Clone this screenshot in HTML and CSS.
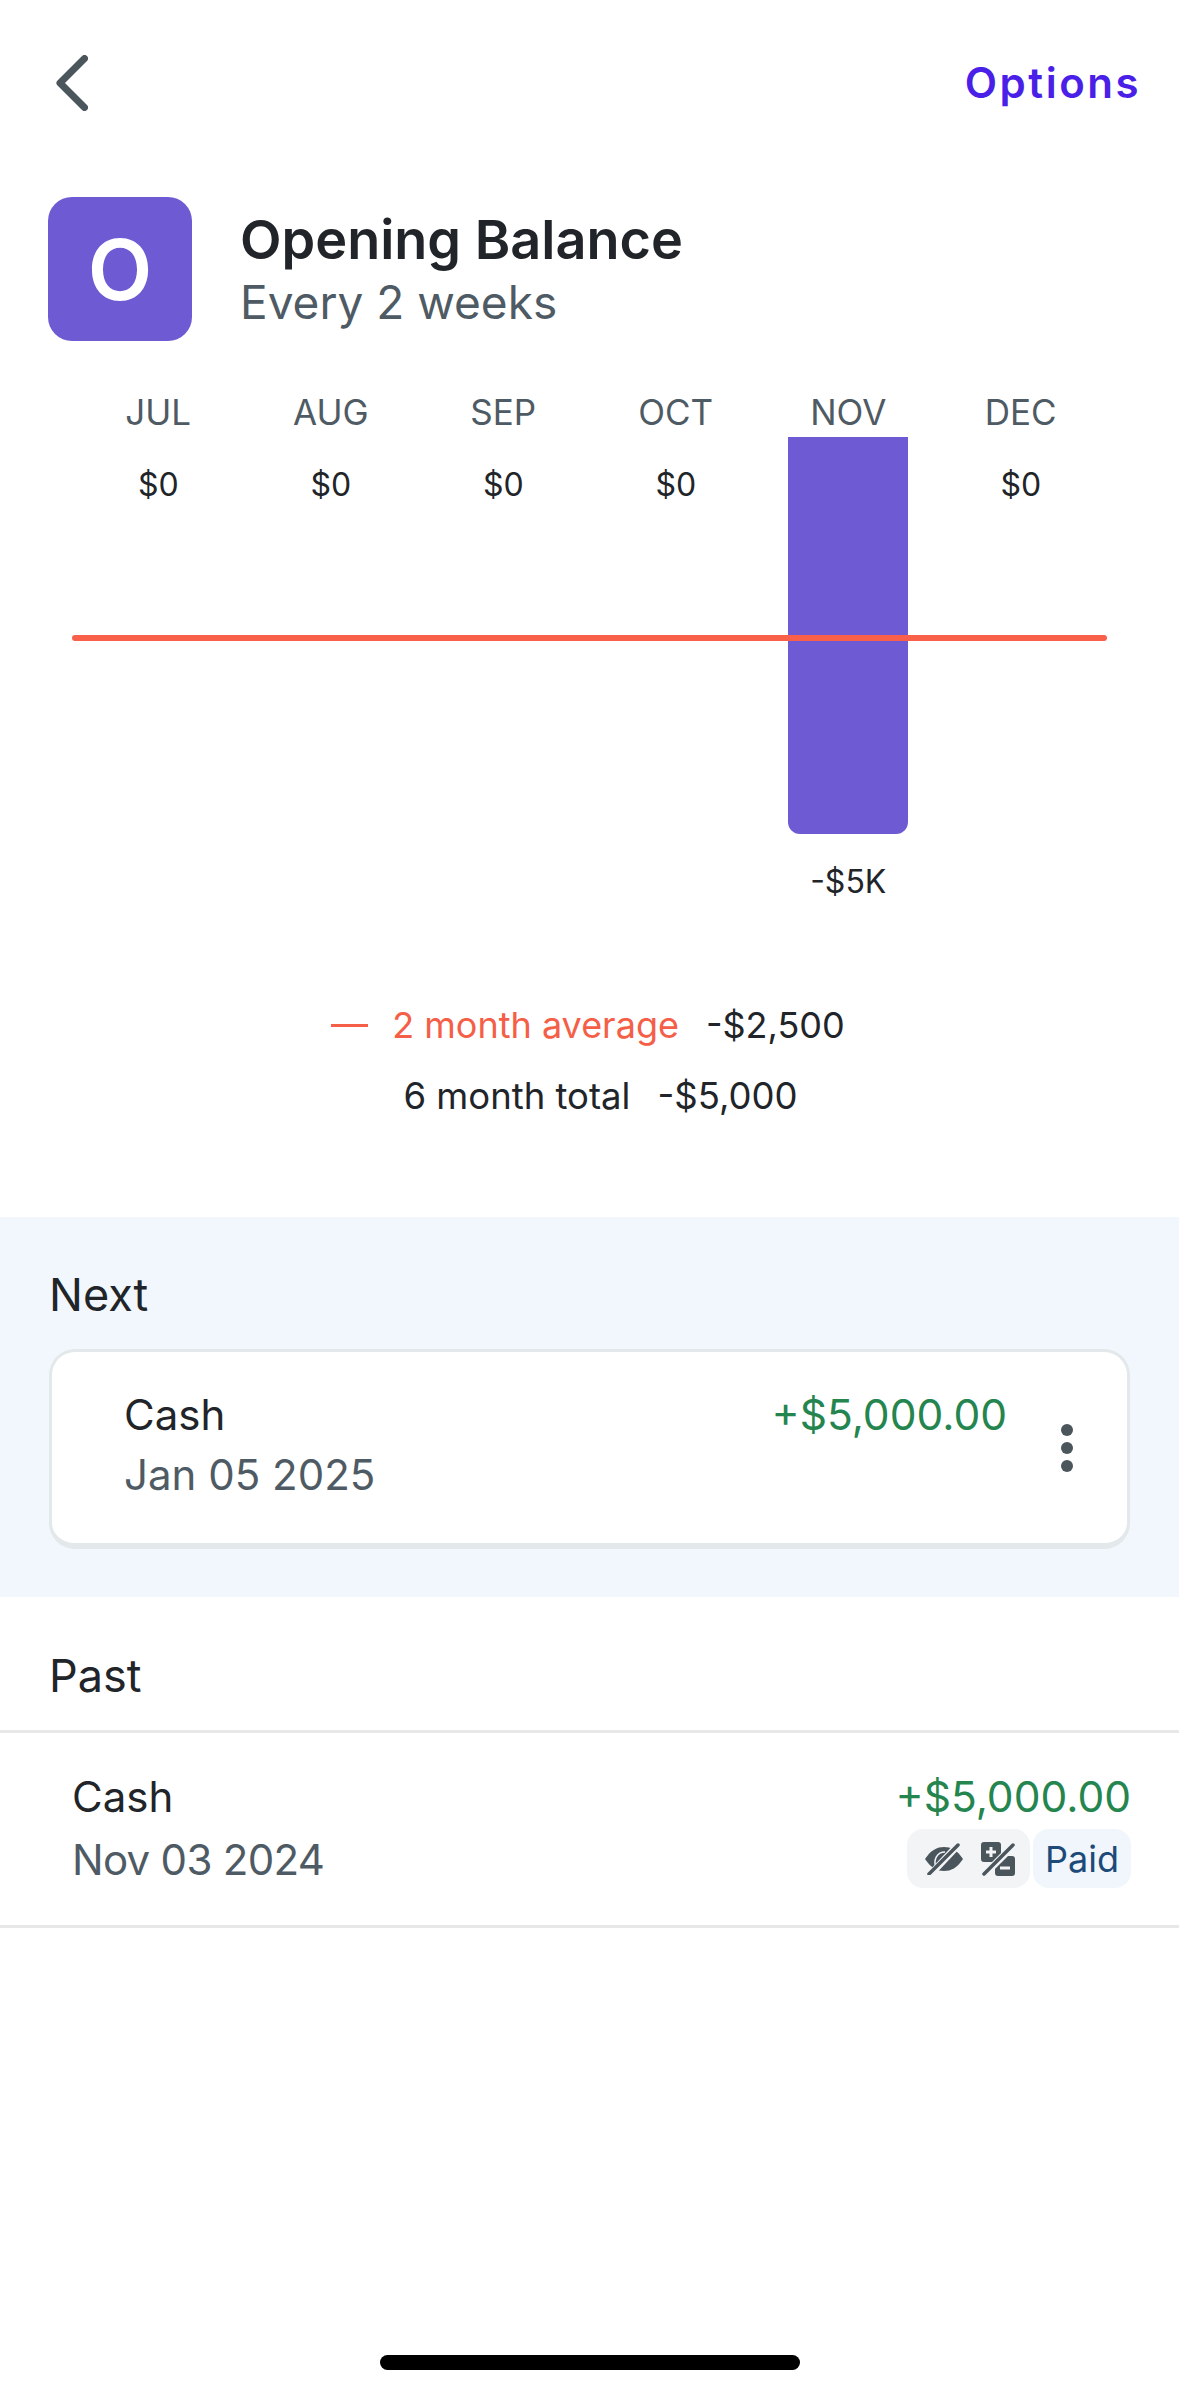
FILE: index.html
```html
<!DOCTYPE html>
<html lang="en">
<head>
<meta charset="UTF-8" />
<meta name="viewport" content="width=device-width, initial-scale=1" />
<title>Opening Balance</title>
<link rel="stylesheet" href="styles.css">
</head>
<body>

<div id="page">
  <div id="topbar">
    <svg class="back-icon" viewBox="0 0 32 56" width="32" height="56">
      <path d="M28.5 3.5 L4 28 L28.5 52.5" fill="none" stroke="#4a555c" stroke-width="7" stroke-linecap="round" stroke-linejoin="round" />
    </svg>
    <a id="options">Options</a>
  </div>

  <div id="title-row">
    <div id="avatar">O</div>
    <div id="title-text">
      <div id="title">Opening Balance</div>
      <div id="subtitle">Every 2 weeks</div>
    </div>
  </div>

  <div id="chart">
    <div class="month">JUL</div>
    <div class="month">AUG</div>
    <div class="month">SEP</div>
    <div class="month">OCT</div>
    <div class="month">NOV</div>
    <div class="month">DEC</div>
    <div class="col"><div class="val">$0</div></div>
    <div class="col"><div class="val">$0</div></div>
    <div class="col"><div class="val">$0</div></div>
    <div class="col"><div class="val">$0</div></div>
    <div class="col"><div class="bar"></div><div class="val">-$5K</div></div>
    <div class="col"><div class="val">$0</div></div>
    <div id="avg-line"></div>
  </div>

  <div id="legend">
    <div class="legend-row avg">
      <span class="dash"></span>
      <span class="avg-label">2 month average</span>
      <span>-$2,500</span>
    </div>
    <div class="legend-row total">
      <span>6 month total</span>
      <span>-$5,000</span>
    </div>
  </div>

  <div id="next">
    <div class="section-title">Next</div>
    <div id="next-card">
      <div class="card-main">
        <div class="line">
          <span class="name">Cash</span>
          <span class="amount">+$5,000.00</span>
        </div>
        <div class="date">Jan 05 2025</div>
      </div>
      <div class="kebab"><span></span><span></span><span></span></div>
    </div>
  </div>

  <div id="past">
    <div class="section-title past-title">Past</div>
    <div id="past-row">
      <div>
        <div class="name">Cash</div>
        <div class="date">Nov 03 2024</div>
      </div>
      <div class="past-right">
        <div class="amount">+$5,000.00</div>
        <div class="badges">
          <div class="badge badge-icons">
            <svg viewBox="0 0 38 32" width="38" height="32">
              <path d="M0 16 C6 7 12 4 19 4 C26 4 32 7 38 16 C32 25 26 28 19 28 C12 28 6 25 0 16Z" fill="#4a555c" />
              <path d="M11 24 C8 17 12 9 20 9" fill="none" stroke="#f3f4f6" stroke-width="1.5" />
              <path d="M4 33 L34 1" stroke="#f3f4f6" stroke-width="7" />
              <path d="M4 31 L33 2" stroke="#4a555c" stroke-width="3.5" stroke-linecap="round" />
            </svg>
            <svg viewBox="0 0 34 34" width="34" height="34">
              <rect x="0" y="0" width="20" height="20" rx="3" fill="#4a555c" />
              <rect x="14" y="14" width="20" height="20" rx="3" fill="#4a555c" />
              <path d="M5 10 H15 M10 5 V15 M19 26 H29" stroke="#f3f4f6" stroke-width="3" />
              <path d="M3 33 L33 3" stroke="#f3f4f6" stroke-width="7" />
              <path d="M3 32 L32 3" stroke="#4a555c" stroke-width="3.5" stroke-linecap="round" />
            </svg>
          </div>
          <div class="badge badge-paid">Paid</div>
        </div>
      </div>
    </div>
  </div>

  <div id="home-bar"><span></span></div>
</div>

</body>
</html>
```
FILE: styles.css
```css
html, body {
  margin: 0;
  padding: 0;
  background: #fff;
}
body {
  font-family: Inter, "Noto Sans", sans-serif;
  color: #212529;
}
#page {
  width: 1179px;
  min-height: 2396px;
  display: flex;
  flex-direction: column;
}
#topbar {
  display: flex;
  justify-content: space-between;
  align-items: center;
  height: 56px;
  margin-top: 55px;
  padding: 0 38px 0 56px;
}
.back-icon {
  display: block;
}
#options {
  font-size: 42px;
  font-weight: 600;
  letter-spacing: 2.5px;
  color: #4a1fe8;
  margin-top: -2px;
}
#title-row {
  display: flex;
  align-items: center;
  gap: 48px;
  margin-top: 86px;
  padding-left: 48px;
}
#title-text {
  padding-top: 3px;
}
#avatar {
  width: 144px;
  height: 144px;
  border-radius: 24px;
  background: #6e5ad3;
  color: #fff;
  font-size: 84px;
  font-weight: 600;
  display: flex;
  align-items: center;
  justify-content: center;
}
#title {
  font-size: 54px;
  font-weight: 600;
  line-height: 62px;
}
#subtitle {
  font-size: 46px;
  line-height: 62px;
  color: #4f5b64;
}
#chart {
  position: relative;
  display: grid;
  grid-template-columns: repeat(6, 1fr);
  margin: 46px 72px 0;
  text-align: center;
}
.month {
  font-size: 35px;
  line-height: 50px;
  color: #4f5b64;
}
.col {
  display: flex;
  flex-direction: column;
  align-items: center;
}
.bar {
  width: 120px;
  height: 397px;
  background: #6e5ad3;
  border-radius: 0 0 12px 12px;
}
.val {
  margin-top: 25px;
  font-size: 32px;
  line-height: 46px;
}
#avg-line {
  position: absolute;
  left: 0;
  right: 0;
  top: 248px;
  height: 6px;
  border-radius: 3px;
  background: #f9604a;
}
#legend {
  margin-top: 95px;
  display: flex;
  flex-direction: column;
  gap: 21px;
}
.legend-row {
  display: flex;
  justify-content: center;
  align-items: center;
  gap: 27px;
  font-size: 36px;
  line-height: 50px;
}
.legend-row.avg {
  padding-right: 3px;
}
.legend-row.total {
  padding-left: 22px;
  font-size: 36.5px;
}
.dash {
  width: 37px;
  height: 3px;
  background: #f55e47;
  margin-right: -3px;
}
.avg-label {
  color: #f55e47;
}
#next {
  margin-top: 96px;
  padding: 50px 49px 48px;
  background: #f2f7fd;
}
.section-title {
  font-size: 45px;
  line-height: 56px;
}
#next-card {
  display: flex;
  align-items: center;
  margin-top: 26px;
  height: 200px;
  box-sizing: border-box;
  padding: 0 54px 6px 72px;
  background: #fff;
  border: 3px solid #e3e8eb;
  border-bottom-width: 6px;
  border-radius: 26px;
}
.card-main {
  flex: 1;
}
.line {
  display: flex;
  justify-content: space-between;
  padding-right: 54px;
}
.name, .amount, .date {
  font-size: 42px;
  line-height: 60px;
}
.amount {
  color: #25854f;
  font-size: 42.5px;
}
.date {
  color: #4f5b64;
}
.kebab {
  display: flex;
  flex-direction: column;
  gap: 6px;
  margin-top: 6px;
}
.kebab span {
  width: 12px;
  height: 12px;
  border-radius: 50%;
  background: #4a555c;
}
.past-title {
  padding: 51px 0 26px 49px;
}
#past-row {
  display: flex;
  justify-content: space-between;
  padding: 34px 48px 35px 72px;
  border-top: 3px solid #e8e8e8;
  border-bottom: 3px solid #e8e8e8;
}
#past-row .date {
  margin-top: 3px;
  letter-spacing: -0.7px;
}
.past-right {
  display: flex;
  flex-direction: column;
  align-items: flex-end;
}
.badges {
  display: flex;
  gap: 3px;
  margin-top: 2px;
}
.badge {
  height: 59px;
  border-radius: 16px;
  display: flex;
  align-items: center;
  box-sizing: border-box;
}
.badge-icons {
  gap: 18px;
  padding: 0 15px 0 18px;
  background: #f3f4f6;
}
.badge-paid {
  padding: 0 12px;
  background: #f1f6fc;
  color: #1d4a78;
  font-size: 36px;
}
#home-bar {
  margin-top: auto;
  display: flex;
  justify-content: center;
  padding-bottom: 26px;
}
#home-bar span {
  width: 420px;
  height: 15px;
  border-radius: 8px;
  background: #000;
}
```
